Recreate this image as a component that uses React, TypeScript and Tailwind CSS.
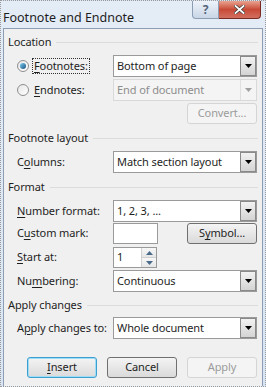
const font = { fontFamily: '"Noto Sans", "Open Sans", Arial, sans-serif' };

const Arrow = ({ disabled }: { disabled?: boolean }) => (
  <svg width="7" height="4" viewBox="0 0 7 4">
    <path d="M0 0 H7 L3.5 4 Z" fill={disabled ? "#a0a0a0" : "#000"} />
  </svg>
);

const Select = ({ value, disabled }: { value: string; disabled?: boolean }) => (
  <div
    className={`flex h-[22px] w-[144px] items-center border ${
      disabled ? "border-[#d9d9d9] bg-[#f4f4f4] text-[#8d8d8d]" : "border-[#9a9a9a] bg-white text-[#1e1e1e]"
    }`}
  >
    <span className="flex-1 truncate pl-[3px] text-[11px] tracking-[-0.1px]">{value}</span>
    {disabled ? (
      <div className="flex h-full w-[16px] items-center justify-center border-l border-[#e0e0e0]">
        <Arrow disabled />
      </div>
    ) : (
      <div className="flex h-[20px] w-[16px] items-center justify-center border border-[#8a8a8a] bg-gradient-to-b from-[#f2f2f2] to-[#d4d4d4]">
        <Arrow />
      </div>
    )}
  </div>
);

const Btn = ({
  children,
  disabled,
  focus,
}: {
  children: React.ReactNode;
  disabled?: boolean;
  focus?: boolean;
}) => (
  <div
    className={`flex h-[21px] w-[70px] items-center justify-center rounded-[3px] border text-[11px] tracking-[-0.1px] ${
      disabled
        ? "border-[#d5d5d5] bg-[#f4f4f4] text-[#9b9b9b]"
        : focus
        ? "border-[#3c9fd0] bg-gradient-to-b from-[#f4f4f4] to-[#dadada] text-[#1e1e1e] shadow-[inset_0_0_0_1px_#9fdcf5]"
        : "border-[#707070] bg-gradient-to-b from-[#f4f4f4] to-[#dadada] text-[#1e1e1e]"
    }`}
  >
    {children}
  </div>
);

const Header = ({ title }: { title: string }) => (
  <div className="flex h-4 items-center pr-[4px] text-[11px] tracking-[-0.1px] text-[#1e1e1e]">
    <span className="mr-[5px]">{title}</span>
    <div className="h-px flex-1 bg-[#dcdcdc]" />
  </div>
);

const Row = ({ label, children }: { label: React.ReactNode; children: React.ReactNode }) => (
  <div className="flex items-center pl-[9px]">
    <div className="w-[96px] whitespace-nowrap text-[11px] tracking-[-0.1px] text-[#1e1e1e]">{label}</div>
    {children}
  </div>
);

const U = ({ children }: { children: React.ReactNode }) => <span className="underline underline-offset-2">{children}</span>;

const Radio = ({ checked }: { checked?: boolean }) => (
  <div className="mr-[3px] flex h-[12px] w-[12px] items-center justify-center rounded-full border border-[#8e8f8f] bg-gradient-to-br from-[#e6e6e6] to-[#ffffff]">
    {checked && <div className="h-[6px] w-[6px] rounded-full bg-gradient-to-br from-[#7ad2f5] to-[#1c5180]" />}
  </div>
);

export default function App() {
  return (
    <div className="h-[387px] w-[266px] overflow-hidden border border-dotted border-[#9a9a9a] bg-gradient-to-b from-[#e4ecf6] to-[#d9e5f3]" style={font}>
      {/* Title bar */}
      <div className="flex h-[27px] items-start justify-between">
        <span className="pl-[2px] pt-[8px] text-[12.5px] text-[#1e1e1e]">Footnote and Endnote</span>
        <div className="mr-[4px] flex">
          <div className="flex h-[18px] w-[27px] items-center justify-center rounded-bl-[4px] border border-t-0 border-[#8c9db4] bg-gradient-to-b from-[#eef3f9] to-[#c9d6e6] text-[12px] font-bold text-[#55667c]">
            ?
          </div>
          <div className="flex h-[18px] w-[42px] items-center justify-center rounded-br-[4px] border border-l-0 border-t-0 border-[#7a2a22] bg-gradient-to-b from-[#e8a291] via-[#c84a36] to-[#d16f5f]">
            <svg width="11" height="9" viewBox="0 0 11 9">
              <path d="M1.5 1 L9.5 8 M9.5 1 L1.5 8" stroke="#3a3a3a" strokeWidth="3.2" strokeLinecap="square" />
              <path d="M1.5 1 L9.5 8 M9.5 1 L1.5 8" stroke="#ffffff" strokeWidth="1.8" strokeLinecap="square" />
            </svg>
          </div>
        </div>
      </div>

      {/* Content panel */}
      <div className="mx-[2px] h-[358px] border border-b-0 border-[#8c9db4] bg-[#f0f0f0] pl-[4px] pt-[5px]">
        <Header title="Location" />
        <div className="mt-[5px] flex items-center pl-[9px]">
          <div className="flex w-[96px] items-center text-[11px] tracking-[-0.1px] text-[#1e1e1e]">
            <Radio checked />
            <span className="border border-dotted border-[#333] px-[1px] leading-[14px]">
              <U>F</U>ootnotes:
            </span>
          </div>
          <Select value="Bottom of page" />
        </div>
        <div className="mt-[2px] flex items-center pl-[9px]">
          <div className="flex w-[96px] items-center text-[11px] tracking-[-0.1px] text-[#1e1e1e]">
            <Radio />
            <span className="px-[2px]">
              <U>E</U>ndnotes:
            </span>
          </div>
          <Select value="End of document" disabled />
        </div>
        <div className="mt-[2px] flex justify-end pr-[5px]">
          <Btn disabled>Convert...</Btn>
        </div>

        <div className="mt-[6px]">
          <Header title="Footnote layout" />
        </div>
        <div className="mt-[5px]">
          <Row label={<>C<U>o</U>lumns:</>}>
            <Select value="Match section layout" />
          </Row>
        </div>

        <div className="mt-[6px]">
          <Header title="Format" />
        </div>
        <div className="mt-[5px]">
          <Row label={<><U>N</U>umber format:</>}>
            <Select value="1, 2, 3, ..." />
          </Row>
        </div>
        <div className="mt-[1px] flex items-center pl-[9px] pr-[5px]">
          <div className="w-[96px] text-[11px] tracking-[-0.1px] text-[#1e1e1e]">
            C<U>u</U>stom mark:
          </div>
          <div className="h-[21px] w-[45px] border border-[#9a9a9a] bg-white" />
          <div className="flex-1" />
          <Btn>
            S<U>y</U>mbol...
          </Btn>
        </div>
        <div className="mt-[3px]">
          <Row label={<><U>S</U>tart at:</>}>
            <div className="flex h-[21px] w-[44px] items-center border border-[#9a9a9a] bg-white">
              <span className="flex-1 pl-[3px] text-[11px] text-[#1e1e1e]">1</span>
              <div className="flex h-full w-[15px] flex-col border-l border-[#d0d0d0]">
                <div className="flex flex-1 items-center justify-center border-b border-[#d0d0d0] bg-gradient-to-b from-[#f7f7f7] to-[#e6e6e6]">
                  <svg width="7" height="4" viewBox="0 0 7 4"><path d="M0 4 H7 L3.5 0 Z" fill="#4a6a8a" /></svg>
                </div>
                <div className="flex flex-1 items-center justify-center bg-gradient-to-b from-[#f7f7f7] to-[#e6e6e6]">
                  <svg width="7" height="4" viewBox="0 0 7 4"><path d="M0 0 H7 L3.5 4 Z" fill="#4a6a8a" /></svg>
                </div>
              </div>
            </div>
          </Row>
        </div>
        <div className="mt-[2px]">
          <Row label={<>Nu<U>m</U>bering:</>}>
            <Select value="Continuous" />
          </Row>
        </div>

        <div className="mt-[5px]">
          <Header title="Apply changes" />
        </div>
        <div className="mt-[4px]">
          <Row label={<>A<U>p</U>ply changes to:</>}>
            <Select value="Whole document" />
          </Row>
        </div>

        <div className="mt-[18px] flex justify-end gap-[10px] pr-[5px]">
          <Btn focus>
            <U>I</U>nsert
          </Btn>
          <Btn>Cancel</Btn>
          <Btn disabled>Apply</Btn>
        </div>
      </div>
    </div>
  );
}
